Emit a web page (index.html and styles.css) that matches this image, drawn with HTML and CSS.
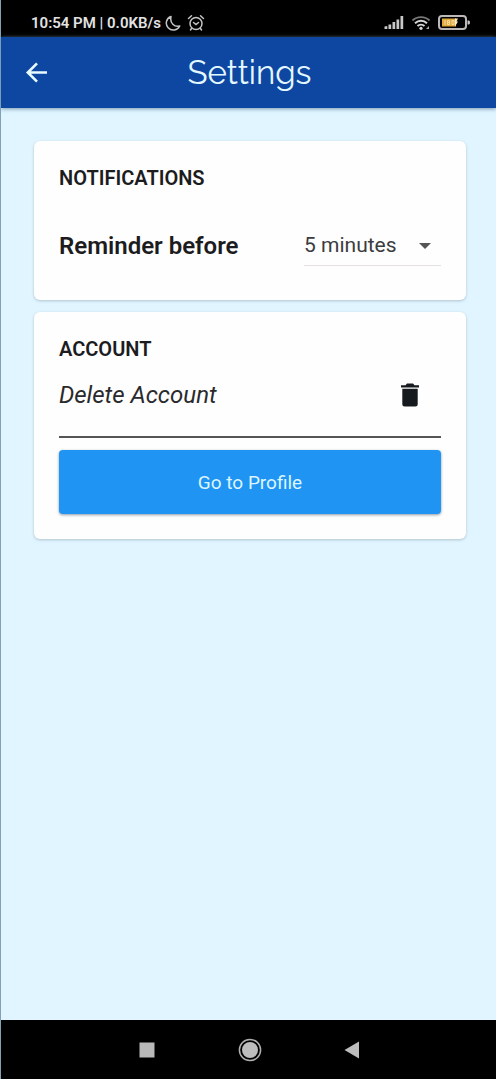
FILE: index.html
```html
<!DOCTYPE html>
<html lang="en">
<head>
<meta charset="utf-8">
<meta name="viewport" content="width=device-width, initial-scale=1">
<title>Settings</title>
<link rel="stylesheet" href="styles.css">
</head>
<body>
<div class="screen">
  <div class="status-bar">
    <span class="status-text">10:54 PM | 0.0KB/s</span>
    <svg class="moon" width="16" height="16" viewBox="0 0 16 16" aria-hidden="true"><path d="M6 1.500A7 7 0 1 0 14.700 11C9.500 12.500 4.500 8 6 1.500Z" fill="none" stroke="#c4c4c4" stroke-width="1.500" stroke-linejoin="round"/></svg>
    <svg class="alarm" width="18" height="18" viewBox="0 0 18 18" fill="none" stroke="#c4c4c4" stroke-width="1.500" stroke-linecap="round" aria-hidden="true"><circle cx="9" cy="9.500" r="6"/><path d="M1.500 4.500 4.500 1.800M16.500 4.500 13.500 1.800M6.500 8.500 9 10.500 11.500 8.500M4.500 14.500 3.500 16M13.500 14.500 14.500 16"/></svg>
    <div class="status-icons">
      <svg width="20" height="16" viewBox="0 0 20 16" fill="#c8c8c8" aria-hidden="true"><path d="M.5 11.500 3.300 11v3H.5zM4.500 9.500h2.700V14H4.500zM8.500 7h2.700v7H8.500zM12.500 4.500h2.700V14h-2.700zM16.500 1h2.700v13h-2.700z"/></svg>
      <svg width="20" height="16" viewBox="0 0 20 16" fill="none" aria-hidden="true"><path d="M1.500 5.500C6 1 14 1 18.500 5.500" stroke="#777" stroke-width="1.800"/><path d="M4 8.300C7.500 5 12.500 5 16 8.300M6.500 11C8.500 9.200 11.500 9.200 13.500 11" stroke="#d8d8d8" stroke-width="2"/><circle cx="10" cy="13.300" r="1.600" fill="#d8d8d8"/><path d="m15 14 3-3v3z" fill="#aaa"/></svg>
      <svg width="32" height="16" viewBox="0 0 32 16" aria-hidden="true"><rect x="1" y="1" width="27" height="13" rx="3" fill="none" stroke="#bcb8b8" stroke-width="2"/><path d="M29.500 5.500h1.200q1.300 0 1.300 2t-1.300 2h-1.200z" fill="#c8c8c8"/><path d="M4 3.500h14v8H4z" fill="#e0a83a"/><path d="M7 5v5M9.500 5.500h2v2h-2zM9.500 7.500v2h2v-2M14 5.500h2v4h-2z" fill="none" stroke="#f8dda0"/><path d="M17 3.500h3l-1.500 3H20L17 11.500z" fill="#fff0c8"/></svg>
    </div>
  </div>
  <header class="app-bar">
    <button class="back" type="button" aria-label="Back"><svg width="24" height="24" viewBox="0 0 24 24" fill="none" stroke="#e8fbff" stroke-width="2.600" aria-hidden="true"><path d="M22 11.500H3M12 2.300 2.800 11.500l9.200 9.200"/></svg></button>
    <h1 class="title">Settings</h1>
  </header>
  <main class="content">
    <section class="card notifications">
      <h2 class="card-title">NOTIFICATIONS</h2>
      <div class="reminder">
        <label class="reminder-label" for="reminder">Reminder before</label>
        <div class="select-wrap">
          <select class="select" id="reminder"><option>5 minutes</option><option>10 minutes</option><option>15 minutes</option></select>
          <svg class="caret" width="14" height="8" viewBox="0 0 14 8" aria-hidden="true"><path d="M1 1h12L7 7z" fill="#555"/></svg>
        </div>
      </div>
    </section>
    <section class="card">
      <h2 class="card-title">ACCOUNT</h2>
      <div class="delete-row">
        <span class="delete-label" id="delete-label">Delete Account</span>
        <button class="trash" type="button" aria-labelledby="delete-label"><svg width="20" height="24" viewBox="0 0 20 24" fill="#161a1e" aria-hidden="true"><path d="M1 2.200h4.500L7 .6h6l1.500 1.600H19v2.400H1zM2.300 5.800h15.400V21q0 2.500-2.500 2.500H4.800q-2.500 0-2.500-2.500z"/></svg></button>
      </div>
      <button class="profile" type="button">Go to Profile</button>
    </section>
  </main>
  <nav class="system-nav" aria-label="System navigation">
    <button class="nav-button" type="button" aria-label="Recent apps"><svg width="24" height="24" viewBox="0 0 24 24" aria-hidden="true"><path d="M4.500 4.500h15v15h-15z" fill="#b9b9b9"/></svg></button>
    <button class="nav-button" type="button" aria-label="Home"><svg width="24" height="24" viewBox="0 0 24 24" aria-hidden="true"><circle cx="12" cy="12" r="10.600" fill="none" stroke="#b0b0b0" stroke-width="1.500"/><circle cx="12" cy="12" r="8" fill="#bdbdbd"/></svg></button>
    <button class="nav-button" type="button" aria-label="Back"><svg width="24" height="24" viewBox="0 0 24 24" aria-hidden="true"><path d="M3.500 12 18 3.500v17z" fill="#bdbdbd"/></svg></button>
  </nav>
</div>
</body>
</html>
```
FILE: styles.css
```css
* {
  box-sizing: border-box;
}

body {
  margin: 0;
  font-family: Roboto, "Liberation Sans", sans-serif;
  color: #1c1c1e;
}

button {
  border: 0;
  padding: 0;
  background: none;
  font-family: inherit;
  cursor: pointer;
}

svg {
  display: block;
}

h1,
h2 {
  margin: 0;
}

.screen {
  display: flex;
  flex-direction: column;
  min-height: 100vh;
  background: #e0f5ff;
  border-left: 1px solid #7fa3b5;
}

.status-bar {
  display: flex;
  align-items: center;
  height: 37px;
  padding: 8px 26px 0 30px;
  background: #000;
}

.status-text {
  color: #e2e2e2;
  font-size: 15px;
  font-weight: 600;
  line-height: 20px;
  white-space: nowrap;
}

.moon {
  margin-left: 4px;
}

.alarm {
  margin-left: 6px;
}

.status-icons {
  display: flex;
  gap: 7px;
  margin-left: auto;
}

.app-bar {
  display: grid;
  grid-template-columns: 24px 1fr 24px;
  align-items: center;
  height: 71px;
  padding: 0 22px 0 24px;
  background: #0e47a1;
  box-shadow: 0 1px 4px #7898b0;
}

.title {
  color: #e4f8ff;
  font-family: Raleway, Inter, sans-serif;
  font-size: 33px;
  font-weight: 400;
  line-height: 40px;
  text-align: center;
}

.content {
  display: flex;
  flex: 1;
  flex-direction: column;
  gap: 12px;
  padding: 33px 30px 33px 33px;
}

.card {
  padding: 25px;
  background: #fefefe;
  border-radius: 6px;
  box-shadow: 0 1px 3px #b0c4ce;
}

.notifications {
  padding-bottom: 34px;
}

.card-title {
  font-size: 20px;
  font-weight: 600;
  line-height: 24px;
}

.reminder {
  display: flex;
  align-items: center;
  justify-content: space-between;
  margin-top: 35px;
}

.reminder-label {
  font-size: 24px;
  font-weight: 600;
  line-height: 40px;
}

.select-wrap {
  position: relative;
  width: 137px;
}

.select {
  display: block;
  width: 100%;
  height: 41px;
  padding: 0;
  border: 0;
  border-bottom: 1px solid #e4dfe1;
  border-radius: 0;
  appearance: none;
  background: transparent;
  color: #3c3c3e;
  font-family: inherit;
  font-size: 21px;
}

.caret {
  position: absolute;
  top: 17px;
  right: 9px;
  pointer-events: none;
}

.delete-row {
  display: flex;
  align-items: center;
  justify-content: space-between;
  margin-top: 14px;
  padding: 0 21px 21px 0;
  border-bottom: 2px solid #555;
}

.delete-label {
  color: #2a2a2c;
  font-size: 24px;
  font-style: italic;
  line-height: 40px;
}

.profile {
  width: 100%;
  height: 64px;
  margin-top: 12px;
  border-radius: 4px;
  background: #2094f3;
  box-shadow: 0 1px 3px #8a9aa5;
  color: #dcf6ff;
  font-size: 19px;
}

.system-nav {
  display: flex;
  align-items: center;
  justify-content: center;
  gap: 79px;
  height: 59px;
  padding-left: 2px;
  background: #000;
}
```
